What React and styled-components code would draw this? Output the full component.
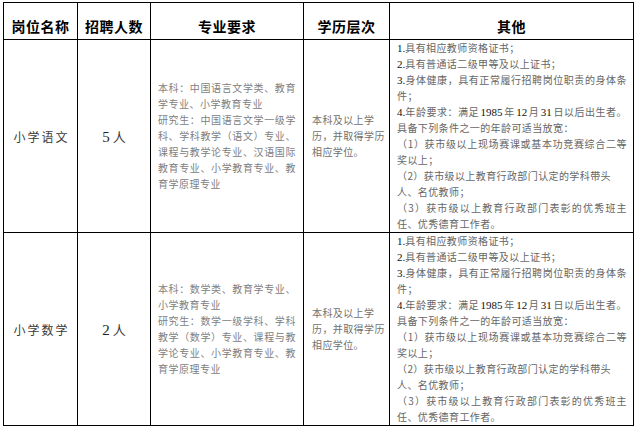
import React from "react";
import styled, { createGlobalStyle } from "styled-components";

const GlobalStyle = createGlobalStyle`
  html, body {
    margin: 0;
    padding: 0;
    background: #fff;
  }
  body {
    font-family: "Noto Sans CJK SC", sans-serif;
  }
`;

// fill: wrapped line, stretched to the full width like the justified source
const majorRows = [
  {
    post: "小学语文",
    count: "5",
    major: [
      { text: "本科：中国语言文学类、教育", fill: true },
      { text: "学专业、小学教育专业" },
      { text: "研究生：中国语言文学一级学", fill: true },
      { text: "科、学科教学（语文）专业、", fill: true },
      { text: "课程与教学论专业、汉语国际", fill: true },
      { text: "教育专业、小学教育专业、教", fill: true },
      { text: "育学原理专业" },
    ],
  },
  {
    post: "小学数学",
    count: "2",
    major: [
      { text: "本科：数学类、教育学专业、", fill: true },
      { text: "小学教育专业" },
      { text: "研究生：数学一级学科、学科", fill: true },
      { text: "教学（数学）专业、课程与教", fill: true },
      { text: "学论专业、小学教育专业、教", fill: true },
      { text: "育学原理专业" },
    ],
  },
];

const degree = ["本科及以上学", "历，并取得学历", "相应学位。"];

const Num = styled.span`
  color: #111;
  font-family: "Liberation Serif", serif;
  font-size: 11px;
  line-height: 0;
  letter-spacing: 0;
  margin: ${(p) => (p.$gap ? "0 1.5px" : "0")};
`;

const otherLines = [
  { text: <><Num>1.</Num>具有相应教师资格证书；</> },
  { text: <><Num>2.</Num>具有普通话二级甲等及以上证书；</> },
  { text: <><Num>3.</Num>身体健康，具有正常履行招聘岗位职责的身体条</>, fill: true },
  { text: <>件；</> },
  {
    text: (
      <>
        <Num>4.</Num>年龄要求：满足<Num $gap>1985</Num>年<Num $gap>12</Num>月<Num $gap>31</Num>日以后出生者。
      </>
    ),
    fill: true,
  },
  { text: <>具备下列条件之一的年龄可适当放宽：</> },
  { text: <>（1）获市级以上现场赛课或基本功竞赛综合二等</>, fill: true },
  { text: <>奖以上；</> },
  { text: <>（2）获市级以上教育行政部门认定的学科带头</> },
  { text: <>人、名优教师；</> },
  { text: <>（3）获市级以上教育行政部门表彰的优秀班主</>, fill: true },
  { text: <>任、优秀德育工作者。</> },
];

const App = () => {
  return (
    <Page>
      <GlobalStyle />
      <Table>
        <colgroup>
          <col style={{ width: 74 }} />
          <col style={{ width: 73 }} />
          <col style={{ width: 153 }} />
          <col style={{ width: 86 }} />
          <col style={{ width: 244 }} />
        </colgroup>
        <thead>
          <tr>
            <Th>岗位名称</Th>
            <Th>招聘人数</Th>
            <Th>专业要求</Th>
            <Th>学历层次</Th>
            <Th>其他</Th>
          </tr>
        </thead>
        <tbody>
          {majorRows.map((row) => (
            <Row key={row.post}>
              <PostCell>{row.post}</PostCell>
              <CountCell>
                <Digit>{row.count}</Digit> 人
              </CountCell>
              <MajorCell>
                {row.major.map((line) => (
                  <Line key={line.text} $fill={line.fill}>
                    {line.text}
                  </Line>
                ))}
              </MajorCell>
              <DegreeCell>
                {degree.map((line) => (
                  <Line key={line}>{line}</Line>
                ))}
              </DegreeCell>
              <OtherCell>
                {otherLines.map((line, i) => (
                  <Line key={i} $fill={line.fill}>
                    {line.text}
                  </Line>
                ))}
              </OtherCell>
            </Row>
          ))}
        </tbody>
      </Table>
    </Page>
  );
};

const Page = styled.div`
  padding: 2px 0 0 3px;
`;

const Table = styled.table`
  border-collapse: collapse;
  table-layout: fixed;
  width: 630px;

  td, th {
    border: 1px solid #000;
    padding: 0;
  }
`;

const Th = styled.th`
  height: 37px;
  box-sizing: border-box;
  vertical-align: bottom;
  padding-bottom: 4px !important;
  font-size: 14px;
  line-height: 18px;
  font-weight: 700;
  letter-spacing: 0.5px;
  color: #000;
  text-align: center;
`;

const Row = styled.tr`
  height: 192px;
`;

const PostCell = styled.td`
  text-align: center;
  vertical-align: middle;
  font-size: 12px;
  letter-spacing: 2px;
  color: #3a3a3a;
  padding-left: 2px !important;
`;

const CountCell = styled.td`
  text-align: center;
  vertical-align: middle;
  font-size: 13px;
  color: #3a3a3a;
`;

const Digit = styled.span`
  font-family: "Liberation Serif", serif;
  font-size: 15px;
  color: #222;
`;

const MajorCell = styled.td`
  vertical-align: middle;
  padding: 0 7px !important;
  font-size: 10px;
  line-height: 16px;
  letter-spacing: 0.5px;
  color: #808080;
`;

const DegreeCell = styled.td`
  vertical-align: middle;
  padding-left: 8px !important;
  font-size: 10px;
  line-height: 16px;
  letter-spacing: 0.4px;
  color: #707070;
`;

const OtherCell = styled.td`
  vertical-align: top;
  padding: 0 6px 0 7px !important;
  font-size: 10px;
  line-height: 16px;
  letter-spacing: 0.4px;
  color: #666;
`;

const Line = styled.div`
  height: 16px;
  overflow: visible;
  white-space: ${(p) => (p.$fill ? "normal" : "nowrap")};
  text-align: ${(p) => (p.$fill ? "justify" : "left")};
  text-align-last: ${(p) => (p.$fill ? "justify" : "left")};
  text-justify: inter-character;
`;

export default App;
